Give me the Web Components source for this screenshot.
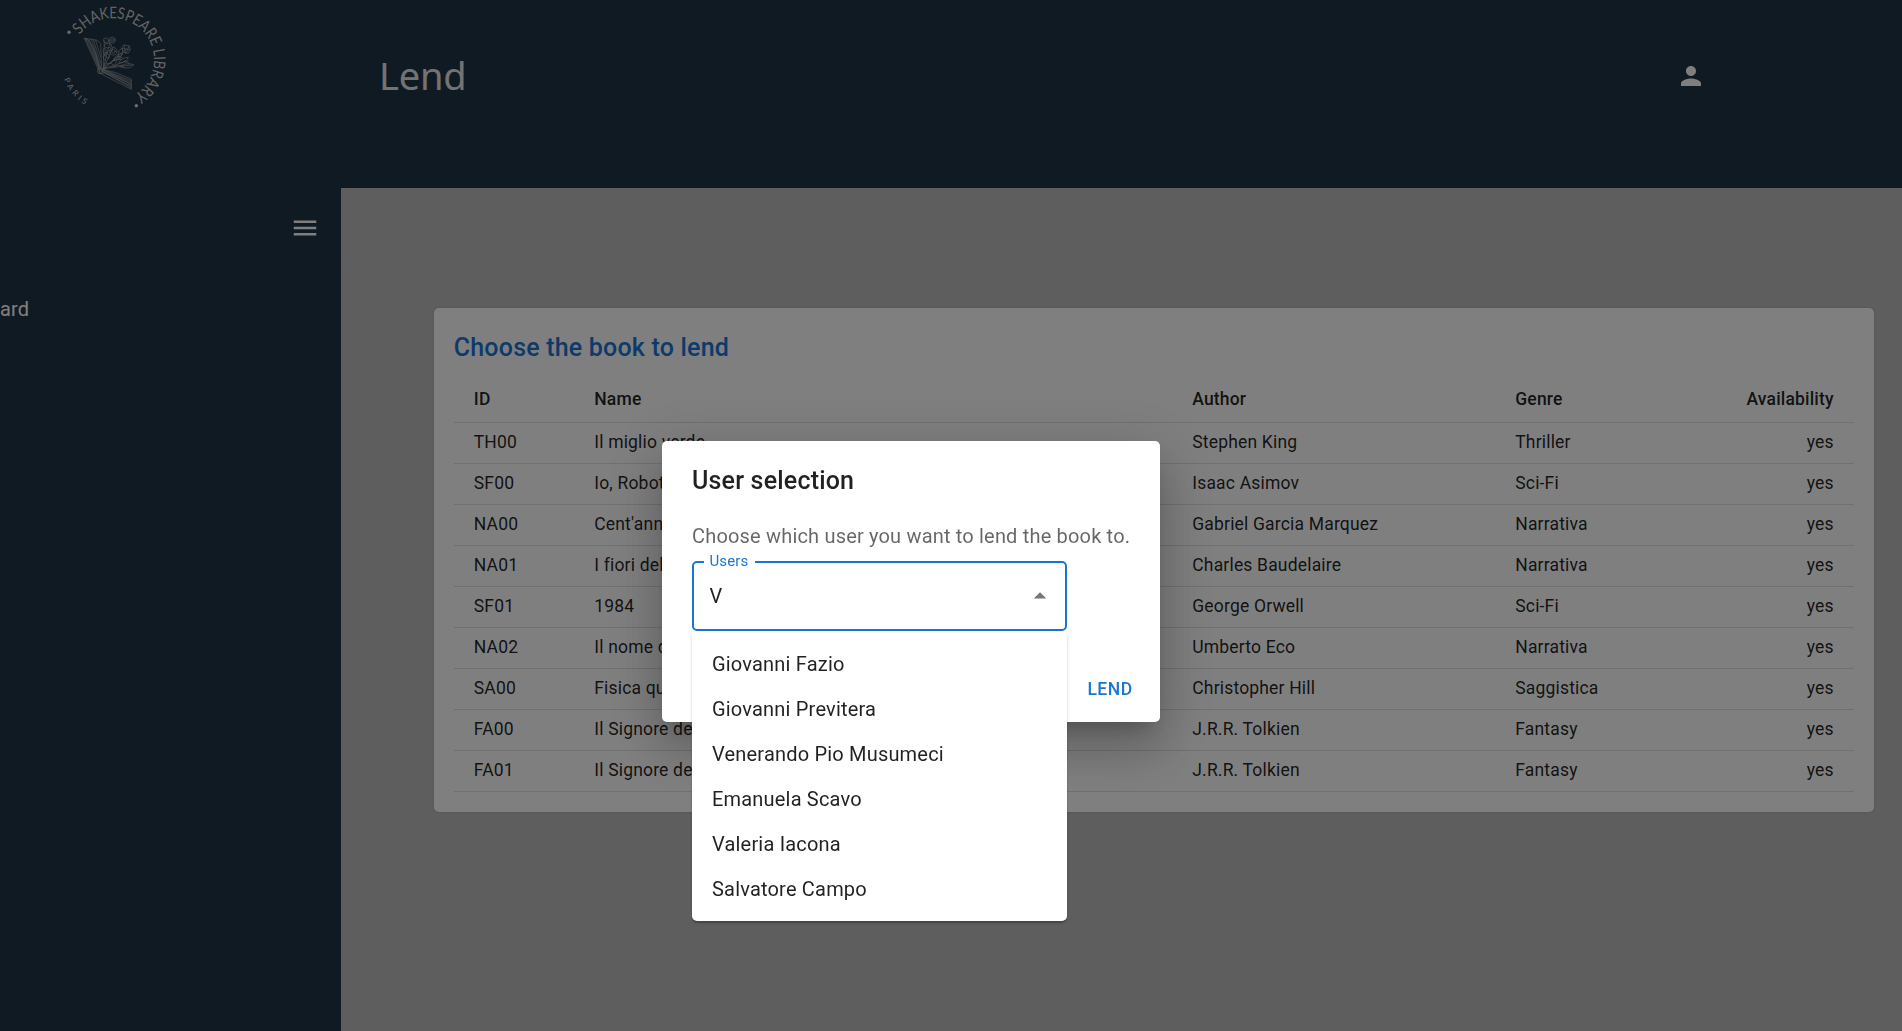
<!DOCTYPE html>
<html lang="en">
<head>
<meta charset="utf-8">
<title>Lend</title>
<style>
html,body{margin:0;height:100%;overflow:hidden}
body{font-family:Roboto,"Liberation Sans",sans-serif;color:rgba(0,0,0,.87);background:#bdbdbd}
</style>
</head>
<body>
<library-app></library-app>
<script>
const make=(name,html)=>customElements.define(name,class extends HTMLElement{
  constructor(){super();this.attachShadow({mode:'open'});}
  connectedCallback(){
    this.shadowRoot.innerHTML=typeof html==='function'?html(this):html;
  }
});

make('library-logo',`
<style>:host{display:block;width:130px;height:120px}svg{display:block;width:130px;height:120px}
text{font-family:Lato,sans-serif;fill:#c9c9c9}</style>
<svg viewBox="0 0 390 360">
 <defs>
  <path id="top" d="M89 104.4A124 124 0 1 1 248 287.5"/>
  <path id="low" d="M41 238A158 158 0 0 0 110 317"/>
 </defs>
 <circle cx="57" cy="97" r="5.2" fill="#d6d6d6"/><circle cx="259" cy="317" r="5.2" fill="#d6d6d6"/>
 <text font-size="48"><textPath href="#top" textLength="436" lengthAdjust="spacingAndGlyphs">SHAKESPEARE LIBRARY</textPath></text>
 <text font-size="24"><textPath href="#low" textLength="101">PARIS</textPath></text>
 <g fill="none" stroke="#b4b4b4" stroke-width="2" stroke-linejoin="round" stroke-linecap="round" opacity=".9">
  <path d="M103 115l47 105 94 48v-31q-45-22-89-30L152 130q-10-12-25-12l-24-3z"/>
  <path d="M107 117l42 92M112 117l38 90M117 118l34 86M124 118l28 84M130 119l22 70M137 122l15 48M103 115q20 4 35 48l12 57"/>
  <path d="M152 211l92 53M154 213l89 46M155 210l88 43M156 208l87 39M157 207l86 35M150 220q20-9 94 34"/>
  <circle cx="150" cy="213" r="8"/>
  <path d="M160 206L163 122M160 206L180 125M160 206L190 140M160 206L228 148M160 206L245 195M160 206L205 168M160 206L235 182"/>
  <ellipse cx="168" cy="121" rx="8" ry="7"/><circle cx="187" cy="120" r="9"/><circle cx="187" cy="120" r="4"/>
  <ellipse cx="174" cy="137" rx="11" ry="7"/><circle cx="190" cy="154" r="11"/><circle cx="190" cy="154" r="5"/>
  <path d="M216 143l6-8 15 3 4 10-6 11-13-1zM222 135l4 24M237 138l-9 22M217 145l22 4"/>
  <path d="M205 168q-1-19 10-22q8 10-2 23zM190 180q10-20 26-20q-4 18-26 22M205 187q16-17 30-15q-6 14-27 17M212 198q16-11 40-4q-12 16-40 7M180 190q20-19 33-10M163 165q-9-13 1-21q9 8 2 22M176 175q-16-5-10-18q15 3 12 17M183 203q22-13 39-4M167 192q18-8 30 9M163 180q-8-10 0-18M170 160q4-12 14-8M196 190q4-16 16-14M200 172q10-6 18 2M222 185q12 0 18 6"/>
 </g>
</svg>`);

make('app-icon',el=>`
<style>:host{display:block;width:30px;height:30px}svg{display:block;width:30px;height:30px;fill:currentColor}</style>
<svg viewBox="0 0 24 24"><path d="${{
 person:'M12 12c2.21 0 4-1.79 4-4s-1.79-4-4-4-4 1.79-4 4 1.79 4 4 4zm0 2c-2.67 0-8 1.34-8 4v2h16v-2c0-2.66-5.33-4-8-4z',
 menu:'M3 18h18v-2H3v2zm0-5h18v-2H3v2zm0-7v2h18V6H3z',
 up:'M7 14l5-5 5 5z'}[el.getAttribute('name')]}"/></svg>`);

make('app-header',`
<style>:host{display:flex;height:188px;box-sizing:border-box;background:#203445;color:#fff;flex:none;border-bottom:1px solid #1e303f}
.logo{width:341px;padding-left:50px;box-sizing:border-box;flex:none}
h1{margin:0;padding:48px 0 0 38px;flex:1;font:400 38px/54px "Noto Sans","Open Sans",sans-serif;color:#e6e6e6;letter-spacing:-.2px}
.user{padding:61px 196px 0 0}</style>
<div class="logo"><library-logo></library-logo></div>
<h1><slot></slot></h1>
<div class="user"><app-icon name="person"></app-icon></div>`);

make('app-sidebar',`
<style>:host{display:flex;flex-direction:column;width:341px;background:#203445;color:#fff;flex:none}
.top{height:81px;display:flex;justify-content:flex-end;align-items:center;padding-right:21px;border-bottom:1px solid #1e303f;box-sizing:border-box}
.nav{padding-top:25px;font-size:20px;line-height:30px;letter-spacing:.19px}</style>
<div class="top"><app-icon name="menu"></app-icon></div>
<div class="nav"><slot></slot></div>`);

make('book-row',el=>`
<style>:host{display:grid;grid-template-columns:120.5px 598px 323px 140px 1fr;border-bottom:1px solid #e0e0e0;
padding:6.5px 0 8.5px;height:25px;font-size:17.5px;line-height:25px;letter-spacing:.18px}
:host([head]){font-weight:500;height:30px;line-height:30px;padding:7.5px 0 8.5px}
span{padding:0 20px;white-space:nowrap}span:last-child{text-align:right}</style>
${el.getAttribute('cells').split('|').map(c=>`<span>${c}</span>`).join('')}`);

const books=[
 "TH00|Il miglio verde|Stephen King|Thriller|yes",
 "SF00|Io, Robot|Isaac Asimov|Sci-Fi|yes",
 "NA00|Cent'anni di solitudine|Gabriel Garcia Marquez|Narrativa|yes",
 "NA01|I fiori del male|Charles Baudelaire|Narrativa|yes",
 "SF01|1984|George Orwell|Sci-Fi|yes",
 "NA02|Il nome della rosa|Umberto Eco|Narrativa|yes",
 "SA00|Fisica quantistica|Christopher Hill|Saggistica|yes",
 "FA00|Il Signore degli Anelli|J.R.R. Tolkien|Fantasy|yes",
 "FA01|Il Signore degli Anelli|J.R.R. Tolkien|Fantasy|yes"];

make('book-card',`
<style>:host{display:block;width:1400px;padding:20px;background:#fff;border-radius:5px;
box-shadow:0 0 3px rgba(0,0,0,.14)}
h2{margin:0 0 8px;font-size:25px;line-height:40px;font-weight:500;letter-spacing:.2px;color:#1976d2}</style>
<h2><slot></slot></h2>
<book-row head cells="ID|Name|Author|Genre|Availability"></book-row>
${books.map(b=>`<book-row cells="${b}"></book-row>`).join('')}`);

make('user-select',`
<style>:host{display:block;position:relative;width:375px;height:70px;margin-top:10px}
fieldset{margin:0;padding:0 10px;box-sizing:border-box;position:absolute;inset:-6px 0 0;border:2px solid #1976d2;border-radius:5px;min-width:0}
legend{padding:0 6.5px 0 5.5px;font-size:15px;line-height:13px;height:14px;color:#1976d2;letter-spacing:.14px}
.value{display:flex;height:70px;align-items:center;justify-content:space-between;padding:0 12.5px 0 17.5px;font-size:20px;letter-spacing:.19px}
.value app-icon{color:#757575}
.menu{position:absolute;top:70px;left:0;width:375px;padding:11px 0 9px;box-sizing:border-box;background:#fff;border-radius:5px;z-index:2;
box-shadow:0 1.25px 1.25px rgba(0,0,0,.2),0 1.25px 3.75px rgba(0,0,0,.12);}
.menu div{height:45px;line-height:45px;padding-left:20px;font-size:20px;letter-spacing:.19px}</style>
<fieldset><legend>Users</legend></fieldset>
<div class="value"><span>V</span><app-icon name="up"></app-icon></div>
<div class="menu">${['Giovanni Fazio','Giovanni Previtera','Venerando Pio Musumeci','Emanuela Scavo','Valeria Iacona','Salvatore Campo'].map(n=>`<div>${n}</div>`).join('')}</div>`);

make('user-dialog',`
<style>:host{display:block;position:fixed;inset:0;background:rgba(0,0,0,.5);padding:441px 0 0 662px;box-sizing:border-box}
section{width:498px;height:281px;background:#fff;border-radius:5px;display:flex;flex-direction:column;
box-shadow:0 14px 19px -9px rgba(0,0,0,.2),0 30px 48px 4px rgba(0,0,0,.14),0 11px 58px 10px rgba(0,0,0,.12)}
h2{margin:0;padding:20px 30px;font-size:25px;line-height:40px;font-weight:500;letter-spacing:.19px}
.body{padding:0 0 25px 30px}p{margin:0;font-size:20px;line-height:30px;letter-spacing:.18px;color:rgba(0,0,0,.6);white-space:nowrap}
footer{display:flex;justify-content:flex-end;padding:10px}
button{all:unset;width:80px;height:45.6px;text-align:center;font-size:17.5px;font-weight:500;letter-spacing:.5px;color:#1976d2}</style>
<section><h2>User selection</h2>
<div class="body"><p>Choose which user you want to lend the book to.</p><user-select></user-select></div>
<footer><button>LEND</button></footer></section>`);

make('library-app',`
<style>:host{display:flex;flex-direction:column;height:100vh}
.row{display:flex;flex:1;min-height:0}
main{flex:1;padding:120px 0 0 92.75px;background:#bdbdbd;min-width:0}</style>
<app-header>Lend</app-header>
<div class="row"><app-sidebar>ard</app-sidebar>
<main><book-card>Choose the book to lend</book-card></main></div>
<user-dialog></user-dialog>`);
</script>
</body>
</html>
